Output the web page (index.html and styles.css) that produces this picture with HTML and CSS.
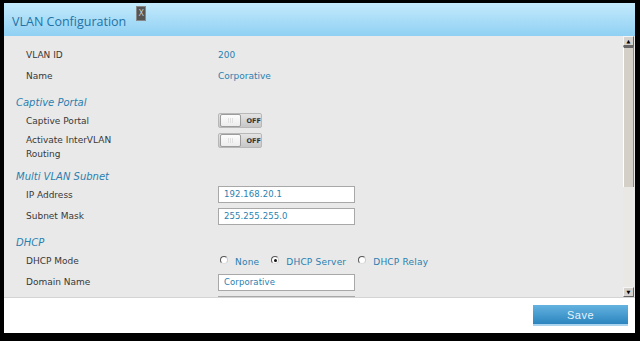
FILE: index.html
```html
<!DOCTYPE html>
<html lang="en">
<head>
    <meta charset="UTF-8">
    <title>VLAN Configuration</title>
    <link rel="stylesheet" href="styles.css">
</head>
<body>
    <div class="dialog">
        <div class="dialog-header">
            <span class="dialog-title">VLAN Configuration</span>
            <span class="close-btn">X</span>
        </div>
        <div class="dialog-body">
            <div class="form-area">
                <div class="row">
                    <span class="label">VLAN ID</span>
                    <span class="value">200</span>
                </div>
                <div class="row">
                    <span class="label">Name</span>
                    <span class="value">Corporative</span>
                </div>

                <div class="section">Captive Portal</div>
                <div class="row">
                    <span class="label">Captive Portal</span>
                    <span class="toggle"><span class="knob"></span><span class="toggle-text">OFF</span></span>
                </div>
                <div class="row row-tall">
                    <span class="label">Activate InterVLAN<br>Routing</span>
                    <span class="toggle"><span class="knob"></span><span class="toggle-text">OFF</span></span>
                </div>

                <div class="section">Multi VLAN Subnet</div>
                <div class="row">
                    <span class="label">IP Address</span>
                    <span class="field">192.168.20.1</span>
                </div>
                <div class="row">
                    <span class="label">Subnet Mask</span>
                    <span class="field">255.255.255.0</span>
                </div>

                <div class="section">DHCP</div>
                <div class="row">
                    <span class="label">DHCP Mode</span>
                    <span class="radios">
                        <span class="radio"><span class="dot"></span>None</span>
                        <span class="radio"><span class="dot checked"></span>DHCP Server</span>
                        <span class="radio"><span class="dot"></span>DHCP Relay</span>
                    </span>
                </div>
                <div class="row">
                    <span class="label">Domain Name</span>
                    <span class="field">Corporative</span>
                </div>
                <div class="row">
                    <span class="label"></span>
                    <span class="field"></span>
                </div>
            </div>
            <div class="scrollbar">
                <div class="sb-btn">&#9650;</div>
                <div class="sb-track">
                    <div class="sb-thumb"></div>
                </div>
                <div class="sb-btn">&#9660;</div>
            </div>
        </div>
        <div class="dialog-footer">
            <button class="save-btn">Save</button>
        </div>
    </div>
</body>
</html>
```

FILE: styles.css
```css
body {
    margin: 0;
    background: #000;
    font-family: "DejaVu Sans", Verdana, sans-serif;
}
.dialog {
    width: 631px;
    margin: 3px 0 0 4px;
}
.dialog-header {
    height: 33px;
    background: linear-gradient(#c4eafc, #8fd0f3);
    display: flex;
    align-items: flex-start;
}
.dialog-title {
    margin: 12px 0 0 8px;
    font-family: "Open Sans", sans-serif;
    font-size: 12.5px;
    line-height: 14px;
    color: #1f73a6;
}
.close-btn {
    margin: 3px 0 0 10px;
    width: 8px;
    height: 13px;
    background: #555;
    border: 1px solid #888;
    color: #ccc;
    font-size: 8px;
    line-height: 13px;
    text-align: center;
}
.dialog-body {
    height: 261px;
    background: #e9e9e9;
    display: flex;
    overflow: hidden;
}
.form-area {
    flex: 1;
    padding-top: 8px;
    overflow: hidden;
}
.row {
    height: 21px;
    display: flex;
    align-items: center;
    padding-left: 22px;
    font-size: 9px;
}
.row + .row {
    height: 22px;
}
.row-tall {
    height: 30px !important;
    align-items: flex-start;
}
.label {
    width: 192px;
    color: #383838;
    line-height: 14px;
    flex-shrink: 0;
}
.row-tall .label {
    margin-top: 2px;
}
.value {
    color: #2a7fb0;
}
.section {
    padding: 9px 0 0 12px;
    height: 14px;
    line-height: 14px;
    font-size: 10px;
    font-style: italic;
    color: #2a7fb0;
}
.toggle {
    width: 42px;
    height: 13px;
    border: 1px solid #b8b8b8;
    border-radius: 2px;
    background: linear-gradient(#e4e4e4, #c6c6c6);
    display: flex;
    align-items: center;
}
.row-tall .toggle {
    margin-top: 2px;
}
.knob {
    width: 19px;
    height: 11px;
    margin-left: 1px;
    border: 1px solid #9c9c9c;
    border-radius: 2px;
    background:
        linear-gradient(90deg, transparent 7px, #e0e0e0 7px, #e0e0e0 8px, transparent 8px, transparent 9px, #e0e0e0 9px, #e0e0e0 10px, transparent 10px, transparent 11px, #e0e0e0 11px, #e0e0e0 12px, transparent 12px) center / 100% 5px no-repeat,
        linear-gradient(#fdfdfd, #ececec);
}
.toggle-text {
    margin-left: 6px;
    font-size: 6.5px;
    font-weight: bold;
    color: #333;
}
.field {
    width: 130px;
    height: 15px;
    line-height: 15px;
    padding-left: 5px;
    background: #fff;
    border: 1px solid #a8a8a8;
    color: #2a7fb0;
    font-size: 8.5px;
    letter-spacing: 0.1px;
}
.radios {
    display: flex;
    gap: 10px;
    color: #2a7fb0;
    margin-top: 3px;
}
.radio {
    display: flex;
    align-items: center;
    letter-spacing: 0.2px;
}
.dot {
    width: 6px;
    height: 6px;
    border-radius: 50%;
    border: 1px solid #555;
    border-right-color: #ccc;
    border-bottom-color: #ddd;
    background: #fff;
    margin: -4px 7px 0 2px;
    position: relative;
}
.dot.checked::after {
    content: "";
    position: absolute;
    left: 1.5px;
    top: 1.5px;
    width: 3px;
    height: 3px;
    border-radius: 50%;
    background: #111;
}
.scrollbar {
    width: 11px;
    margin-right: 1px;
    display: flex;
    flex-direction: column;
    background: #e4e2de;
}
.sb-btn {
    height: 10px;
    background: #d6d3ce;
    border: 1px solid #f5f5f5;
    border-right-color: #666;
    border-bottom-color: #666;
    box-sizing: border-box;
    font-size: 5px;
    line-height: 8px;
    text-align: center;
    color: #000;
}
.sb-track {
    flex: 1;
    background: #eae8e4;
}
.sb-thumb {
    height: 141px;
    background: #d4d0c8;
    border-top: 2px solid #666;
    border-left: 1px solid #fff;
    border-right: 1px solid #888;
    box-sizing: border-box;
}
.dialog-footer {
    height: 36px;
    background: #fff;
    border-top: 1px solid #d4d4d4;
    box-sizing: border-box;
    display: flex;
    justify-content: flex-end;
    align-items: flex-start;
    padding: 7px 7px 0 0;
}
.save-btn {
    width: 95px;
    height: 21px;
    border: none;
    border-bottom: 2px solid #a9d3ee;
    background: linear-gradient(#64b3e0, #2b85bf);
    color: #e6f3fc;
    font-family: "Liberation Sans", Arial, sans-serif;
    font-size: 11px;
    letter-spacing: 0.5px;
    padding: 0;
}
```
